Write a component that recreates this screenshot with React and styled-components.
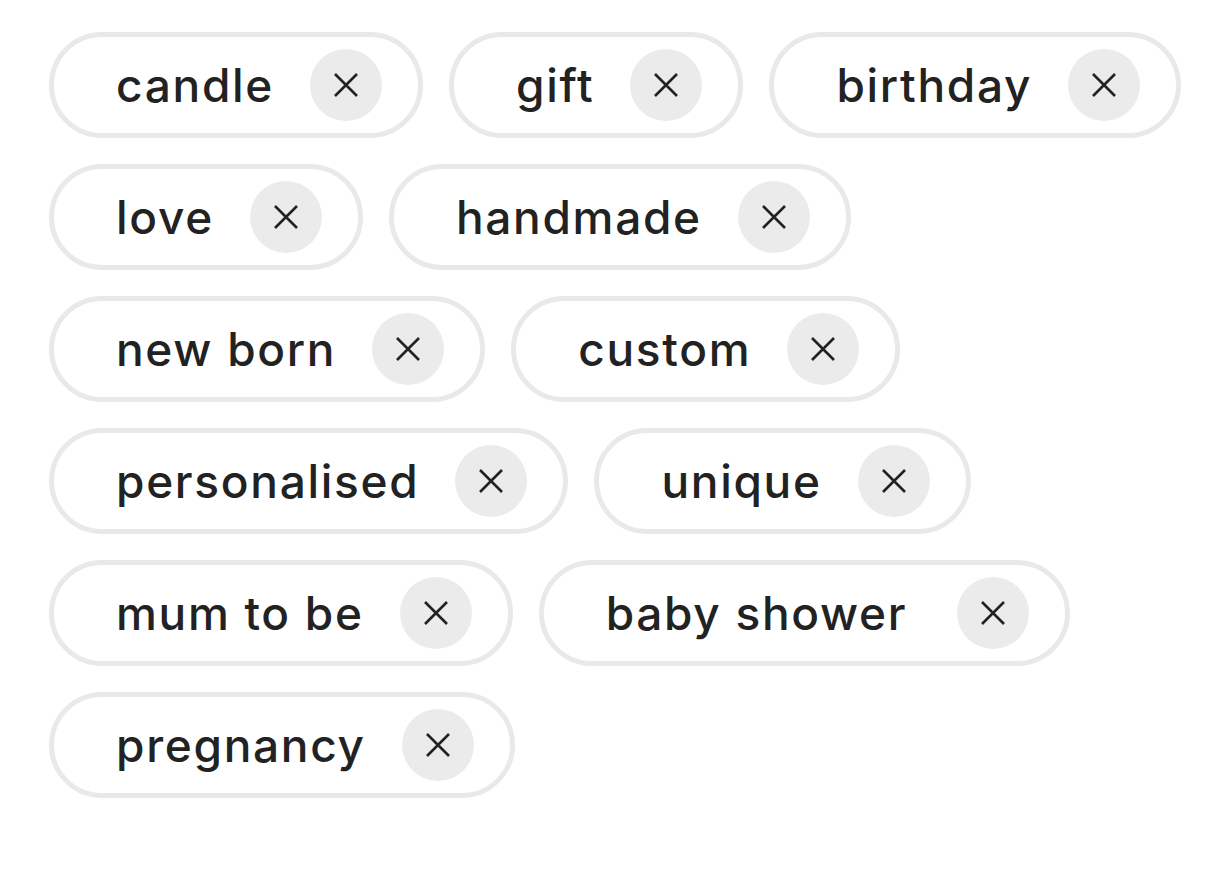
import styled, { createGlobalStyle } from "styled-components";

const GlobalStyle = createGlobalStyle`
  body {
    margin: 0;
    background: #ffffff;
    font-family: Inter, "Noto Sans", "Liberation Sans", sans-serif;
  }
`;

const TagList = styled.div`
  display: flex;
  flex-wrap: wrap;
  align-items: flex-start;
  gap: 26px 26px;
  padding: 32px 0 0 49px;
`;

const Tag = styled.div`
  display: flex;
  align-items: center;
  gap: 36px;
  height: 106px;
  box-sizing: border-box;
  padding: 0 36px 0 62px;
  border: 5px solid #e9e9e9;
  border-radius: 53px;
  background: #fff;
`;

const Label = styled.span`
  font-size: 46px;
  font-weight: 500;
  color: #222;
  letter-spacing: 1.7px;
  white-space: pre;
`;

const RemoveButton = styled.button`
  display: flex;
  align-items: center;
  justify-content: center;
  width: 72px;
  height: 72px;
  flex: none;
  padding: 0;
  border: none;
  border-radius: 50%;
  background: #ebebeb;
  color: #222;
  cursor: pointer;
`;

const tags = [
  "candle",
  "gift",
  "birthday",
  "love",
  "handmade",
  "new born",
  "custom",
  "personalised",
  "unique",
  "mum to be",
  "baby shower ",
  "pregnancy",
];

const CloseIcon = () => (
  <svg width="26" height="26" viewBox="0 0 26 26" fill="none">
    <path
      d="M2 2 L24 24 M24 2 L2 24"
      stroke="currentColor"
      strokeWidth="2.6"
      strokeLinecap="butt"
    />
  </svg>
);

const App = () => {
  return (
    <>
      <GlobalStyle />
      <TagList>
        {tags.map((tag) => (
          <Tag key={tag}>
            <Label>{tag}</Label>
            <RemoveButton aria-label={`Remove ${tag.trim()}`}>
              <CloseIcon />
            </RemoveButton>
          </Tag>
        ))}
      </TagList>
    </>
  );
};

export default App;
